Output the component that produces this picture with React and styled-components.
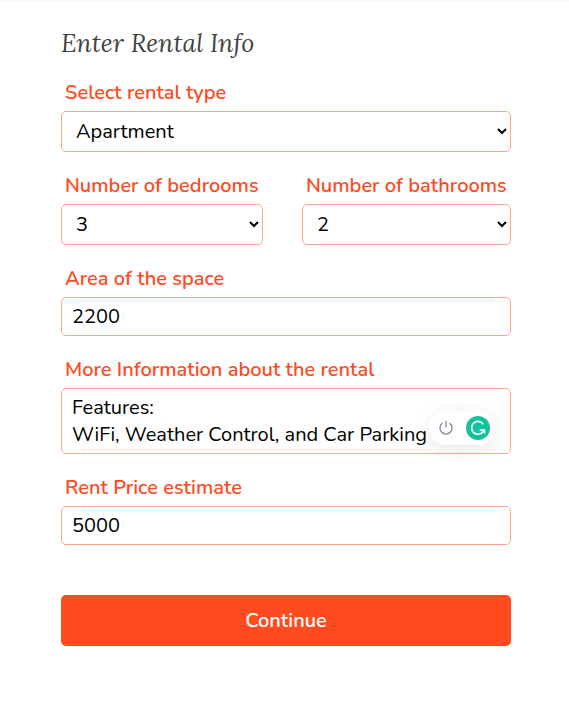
import React from 'react';
import styled, { createGlobalStyle } from 'styled-components';

const Global = createGlobalStyle`
  * { box-sizing: border-box; }
  body { margin: 0; background: #fff; font-family: Nunito, Lato, sans-serif; }
`;

const Page = styled.main`
  height: 702px;
  padding: 25px 58px 0 61px;
  border-top: 2px solid #f7f7f7;
  overflow: hidden;
`;

const Title = styled.h1`
  margin: 0 0 18px;
  font: italic 400 25px/32px Lora, 'Liberation Serif', serif;
  color: #444;
  white-space: nowrap;
`;

const Form = styled.form`
  display: flex;
  flex-direction: column;
  gap: 18px;
`;

const Row = styled.div`
  display: grid;
  grid-template-columns: 202px 209px;
  justify-content: space-between;
`;

const Field = styled.div`
  display: flex;
  flex-direction: column;
  position: relative;
`;

const Label = styled.label`
  height: 34px;
  padding-left: 4px;
  font-size: 20px;
  font-weight: 600;
  line-height: 31px;
  color: #ff4b1f;
  white-space: nowrap;
`;

const control = `
  width: 100%;
  margin: 0;
  border: 1px solid #ffa58f;
  border-radius: 5px;
  outline: none;
  background: #fff;
  color: #000;
  font: 400 20px/27px Nunito, Lato, sans-serif;
`;

const Select = styled.select`
  ${control}
  height: 41px;
  padding: 0 0 0 10px;
`;

const Input = styled.input`
  ${control}
  height: 39px;
  padding: 0 10px;
`;

const TextArea = styled.textarea`
  ${control}
  display: block;
  height: 66px;
  padding: 5px 10px;
  resize: none;
  overflow: hidden;
`;

const Assistant = styled.div`
  position: absolute;
  right: 16px;
  bottom: 9px;
  display: flex;
  align-items: center;
  justify-content: space-between;
  width: 66px;
  height: 34px;
  padding: 0 5px 0 10px;
  border-radius: 17px;
  background: #fff;
  box-shadow: 0 4px 18px rgba(30, 30, 60, 0.1);
`;

const Button = styled.button`
  height: 51px;
  margin-top: 32px;
  padding: 0;
  border: 0;
  border-radius: 5px;
  background: #ff4b1f;
  color: #fff;
  font: 600 20px/27px Nunito, Lato, sans-serif;
`;

const PowerIcon = () => (
  <svg width="14" height="16" viewBox="0 0 14 16" fill="none" stroke="#84889e" strokeWidth="1.3">
    <path d="M3.6 3.1a6 6 0 1 0 6.8 0M7 1v6.5" />
  </svg>
);

const CheckerLogo = () => (
  <svg width="24" height="24" viewBox="0 0 24 24" fill="none">
    <circle cx="12" cy="12" r="12" fill="#15c39a" />
    <path d="M17.3 8.2A6.4 6.4 0 1 0 17.2 15.6L18 14.2H13.6" stroke="#fff" strokeWidth="1.6" />
    <path d="M14.8 13.4h4.4v4.8z" fill="#fff" />
  </svg>
);

const SelectField = ({ id, label, value }) => (
  <Field>
    <Label htmlFor={id}>{label}</Label>
    <Select id={id} defaultValue={value}>
      <option>{value}</option>
    </Select>
  </Field>
);

const InputField = ({ id, label, value }) => (
  <Field>
    <Label htmlFor={id}>{label}</Label>
    <Input id={id} defaultValue={value} />
  </Field>
);

export default function App() {
  return (
    <>
      <Global />
      <Page>
        <Title>Enter Rental Info</Title>
        <Form>
          <SelectField id="type" label="Select rental type" value="Apartment" />
          <Row>
            <SelectField id="bedrooms" label="Number of bedrooms" value="3" />
            <SelectField id="bathrooms" label="Number of bathrooms" value="2" />
          </Row>
          <InputField id="area" label="Area of the space" value="2200" />
          <Field>
            <Label htmlFor="info">More Information about the rental</Label>
            <TextArea
              id="info"
              spellCheck={false}
              defaultValue={'Features:\nWiFi, Weather Control, and Car Parking'}
            />
            <Assistant>
              <PowerIcon />
              <CheckerLogo />
            </Assistant>
          </Field>
          <InputField id="price" label="Rent Price estimate" value="5000" />
          <Button type="button">Continue</Button>
        </Form>
      </Page>
    </>
  );
}
